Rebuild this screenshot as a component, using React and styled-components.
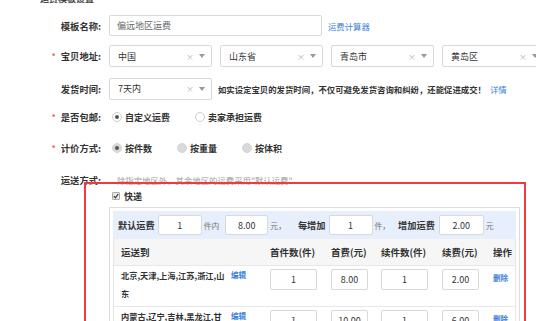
import React from "react";
import styled, { createGlobalStyle } from "styled-components";

const GlobalStyle = createGlobalStyle`
  html, body {
    margin: 0;
    padding: 0;
    overflow: hidden;
    background: #fff;
  }
  body {
    font-family: "Noto Sans CJK SC", "Noto Sans", sans-serif;
    color: #333;
  }
`;

const Page = styled.div`
  position: relative;
  width: 536px;
  height: 321px;
  overflow: hidden;
`;

const Title = styled.div`
  margin: -7px 0 0 40px;
  font-size: 9px;
  line-height: 12px;
  font-weight: 700;
  color: #444;
`;

const Row = styled.div`
  display: flex;
  align-items: center;
  height: ${(p) => p.$h || 22}px;
  margin-top: ${(p) => p.$mt || 0}px;
`;

const Label = styled.div`
  width: 101px;
  flex: none;
  margin-right: 8px;
  text-align: right;
  font-size: 9.3px;
  font-weight: 700;
  color: #333;
  white-space: nowrap;
`;

const Star = styled.span`
  color: #f04848;
  font-weight: 400;
  margin-right: 5px;
`;

const TextInput = styled.div`
  box-sizing: border-box;
  width: ${(p) => p.$w}px;
  height: ${(p) => p.$h || 21}px;
  border: 1px solid #d9d9d9;
  border-radius: 2px;
  background: #fff;
  display: flex;
  align-items: center;
  justify-content: ${(p) => (p.$center ? "center" : "flex-start")};
  padding: ${(p) => (p.$center ? "0" : "0 7px")};
  font-size: 9px;
  font-weight: 400;
  color: ${(p) => p.$color || "#333"};
  flex: none;
`;

const Selects = styled.div`
  display: flex;
  gap: 8px;
`;

const Select = styled.div`
  box-sizing: border-box;
  width: 103px;
  height: 22px;
  border: 1px solid #d9d9d9;
  border-radius: 2px;
  display: flex;
  align-items: center;
  padding: 0 6px 0 8px;
  font-size: 9px;
  color: #333;
  flex: none;
`;

const SelectText = styled.span`
  flex: 1;
`;

const Clear = styled.span`
  font-size: 8px;
  color: #b5b5b5;
  margin-right: 5px;
`;

const Caret = styled.span`
  width: 0;
  height: 0;
  border-left: 3.5px solid transparent;
  border-right: 3.5px solid transparent;
  border-top: 4px solid #999;
`;

const Link = styled.a`
  color: #3b7fd9;
  font-size: 8.4px;
  text-decoration: none;
  margin-left: ${(p) => p.$ml ?? 6}px;
  white-space: nowrap;
`;

const Help = styled.span`
  font-size: 8.4px;
  font-weight: 700;
  color: #333;
  margin-left: 6px;
  white-space: nowrap;
`;

const Radios = styled.div`
  display: flex;
  align-items: center;
  padding-left: 3px;
  gap: 25px;
`;

const RadioItem = styled.label`
  display: flex;
  align-items: center;
  gap: 3px;
  font-size: 9px;
  font-weight: 700;
  color: #333;
  white-space: nowrap;
`;

const RadioDot = styled.span`
  box-sizing: border-box;
  width: 10px;
  height: 10px;
  border-radius: 50%;
  border: 1px solid ${(p) => (p.$disabled ? "#d6d6d6" : "#cfcfcf")};
  background: ${(p) => (p.$disabled ? "#d9d9d9" : "#fff")};
  display: flex;
  align-items: center;
  justify-content: center;
  &::after {
    content: "";
    width: 4px;
    height: 4px;
    border-radius: 50%;
    background: ${(p) => (p.$checked ? "#555" : "transparent")};
  }
`;

const Hint = styled.span`
  font-size: 8.4px;
  color: #a0a0a0;
  margin-left: 8px;
  white-space: nowrap;
`;

const Delivery = styled.div`
  margin-left: 109px;
  width: 411px;
`;

const CheckRow = styled.div`
  display: flex;
  align-items: center;
  gap: 4px;
  height: 12px;
  padding-left: 3px;
  font-size: 9px;
  font-weight: 700;
`;

const CheckBox = styled.span`
  box-sizing: border-box;
  width: 8px;
  height: 8px;
  border: 1px solid #aaa;
  border-radius: 1px;
  background: #e8e8e8;
  display: flex;
  align-items: center;
  justify-content: center;
`;

const Panel = styled.div`
  box-sizing: border-box;
  margin-top: 5px;
  border: 1px solid #dedede;
  padding: 3px 3px 0;
  background: #fff;
`;

const Band = styled.div`
  display: flex;
  align-items: center;
  height: 28px;
  background: #e6effb;
  padding-left: 5px;
`;

const BandLabel = styled.span`
  font-size: 9.2px;
  font-weight: 700;
  color: #333;
  white-space: nowrap;
  margin: 0 ${(p) => p.$mr ?? 3}px 0 ${(p) => p.$ml ?? 0}px;
`;

const Unit = styled.span`
  font-size: 7.8px;
  color: #777;
  white-space: nowrap;
  margin: 0 ${(p) => p.$mr ?? 6}px 0 2px;
  min-width: ${(p) => p.$w || 0}px;
`;

const Table = styled.div`
  border-left: 1px solid #e6e6e6;
  border-right: 1px solid #e6e6e6;
`;

const Grid = styled.div`
  display: grid;
  grid-template-columns: 149px 61px 50px 61px 51px 1fr;
  background: ${(p) => (p.$head ? "#f6f6f6" : "#fff")};
  border-top: ${(p) => (p.$head ? "none" : "1px solid #e8e8e8")};
  min-height: ${(p) => p.$h || 40}px;
  align-items: ${(p) => (p.$head ? "center" : "start")};
`;

const Cell = styled.div`
  padding-left: 7px;
  font-size: ${(p) => (p.$head ? 9.5 : 8.4)}px;
  font-weight: 700;
  color: #333;
  white-space: nowrap;
  padding-top: ${(p) => p.$pt || 0}px;
`;

const AreaCell = styled.div`
  padding-left: 7px;
  display: flex;
  align-items: flex-start;
`;

const AreaText = styled.div`
  width: 110px;
  flex: none;
  font-size: 8.2px;
  font-weight: 700;
  line-height: 18px;
  color: #333;
  white-space: nowrap;
`;

const SmallLink = styled(Link)`
  font-size: 7.6px;
  font-weight: 700;
  line-height: 18px;
`;

const RedFrame = styled.div`
  position: absolute;
  left: 84px;
  top: 182px;
  width: 442px;
  height: 160px;
  box-sizing: border-box;
  border: 2px solid #f03a40;
  pointer-events: none;
`;

const SelectBox = ({ children }) => (
  <Select>
    <SelectText>{children}</SelectText>
    <Clear>×</Clear>
    <Caret />
  </Select>
);

const rules = [
  { lines: ["北京,天津,上海,江苏,浙江,山", "东"], v: ["1", "8.00", "1", "2.00"] },
  { lines: ["内蒙古,辽宁,吉林,黑龙江,甘", "肃"], v: ["1", "10.00", "1", "6.00"] },
];

export default function App() {
  return (
    <Page>
      <GlobalStyle />
      <Title>运费模板设置</Title>

      <Row $mt={10} $h={21}>
        <Label>模板名称:</Label>
        <TextInput $w={213} $color="#666">偏远地区运费</TextInput>
        <Link>运费计算器</Link>
      </Row>

      <Row $mt={9} $h={22}>
        <Label><Star>*</Star>宝贝地址:</Label>
        <Selects>
          <SelectBox>中国</SelectBox>
          <SelectBox>山东省</SelectBox>
          <SelectBox>青岛市</SelectBox>
          <SelectBox>黄岛区</SelectBox>
        </Selects>
      </Row>

      <Row $mt={11} $h={21}>
        <Label>发货时间:</Label>
        <SelectBox>7天内</SelectBox>
        <Help>如实设定宝贝的发货时间，不仅可避免发货咨询和纠纷，还能促进成交！</Help>
        <Link $ml={4}>详情</Link>
      </Row>

      <Row $mt={8} $h={20}>
        <Label><Star>*</Star>是否包邮:</Label>
        <Radios>
          <RadioItem><RadioDot $checked />自定义运费</RadioItem>
          <RadioItem><RadioDot />卖家承担运费</RadioItem>
        </Radios>
      </Row>

      <Row $mt={11} $h={20}>
        <Label><Star>*</Star>计价方式:</Label>
        <Radios>
          <RadioItem><RadioDot $disabled $checked />按件数</RadioItem>
          <RadioItem><RadioDot $disabled />按重量</RadioItem>
          <RadioItem><RadioDot $disabled />按体积</RadioItem>
        </Radios>
      </Row>

      <Row $mt={12} $h={20}>
        <Label>运送方式:</Label>
        <Hint>除指定地区外，其余地区的运费采用"默认运费"</Hint>
      </Row>

      <Delivery>
        <CheckRow>
          <CheckBox>
            <svg width="6" height="6" viewBox="0 0 6 6">
              <path d="M0.8 3.2 L2.4 4.8 L5.2 1" fill="none" stroke="#333" strokeWidth="1.2" />
            </svg>
          </CheckBox>
          快递
        </CheckRow>

        <Panel>
          <Band>
            <BandLabel>默认运费</BandLabel>
            <TextInput $w={44} $h={20} $center>1</TextInput>
            <Unit $mr={6}>件内</Unit>
            <TextInput $w={43} $h={20} $center>8.00</TextInput>
            <Unit $mr={12} $w={12}>元，</Unit>
            <BandLabel>每增加</BandLabel>
            <TextInput $w={44} $h={20} $center>1</TextInput>
            <Unit $mr={8} $w={12}>件，</Unit>
            <BandLabel $mr={4}>增加运费</BandLabel>
            <TextInput $w={45} $h={20} $center>2.00</TextInput>
            <Unit>元</Unit>
          </Band>

          <Table>
            <Grid $head $h={26}>
              <Cell $head>运送到</Cell>
              <Cell $head>首件数(件)</Cell>
              <Cell $head>首费(元)</Cell>
              <Cell $head>续件数(件)</Cell>
              <Cell $head>续费(元)</Cell>
              <Cell $head>操作</Cell>
            </Grid>
            {rules.map((r) => (
              <Grid key={r.lines[0]} $h={40}>
                <AreaCell>
                  <AreaText>
                    {r.lines.map((l) => (
                      <div key={l}>{l}</div>
                    ))}
                  </AreaText>
                  <SmallLink $ml={0}>编辑</SmallLink>
                </AreaCell>
                <Cell $pt={3}><TextInput $w={47} $center>{r.v[0]}</TextInput></Cell>
                <Cell $pt={3}><TextInput $w={37} $center>{r.v[1]}</TextInput></Cell>
                <Cell $pt={3}><TextInput $w={47} $center>{r.v[2]}</TextInput></Cell>
                <Cell $pt={3}><TextInput $w={37} $center>{r.v[3]}</TextInput></Cell>
                <Cell $pt={3}><SmallLink $ml={0}>删除</SmallLink></Cell>
              </Grid>
            ))}
          </Table>
        </Panel>
      </Delivery>

      <RedFrame />
    </Page>
  );
}
